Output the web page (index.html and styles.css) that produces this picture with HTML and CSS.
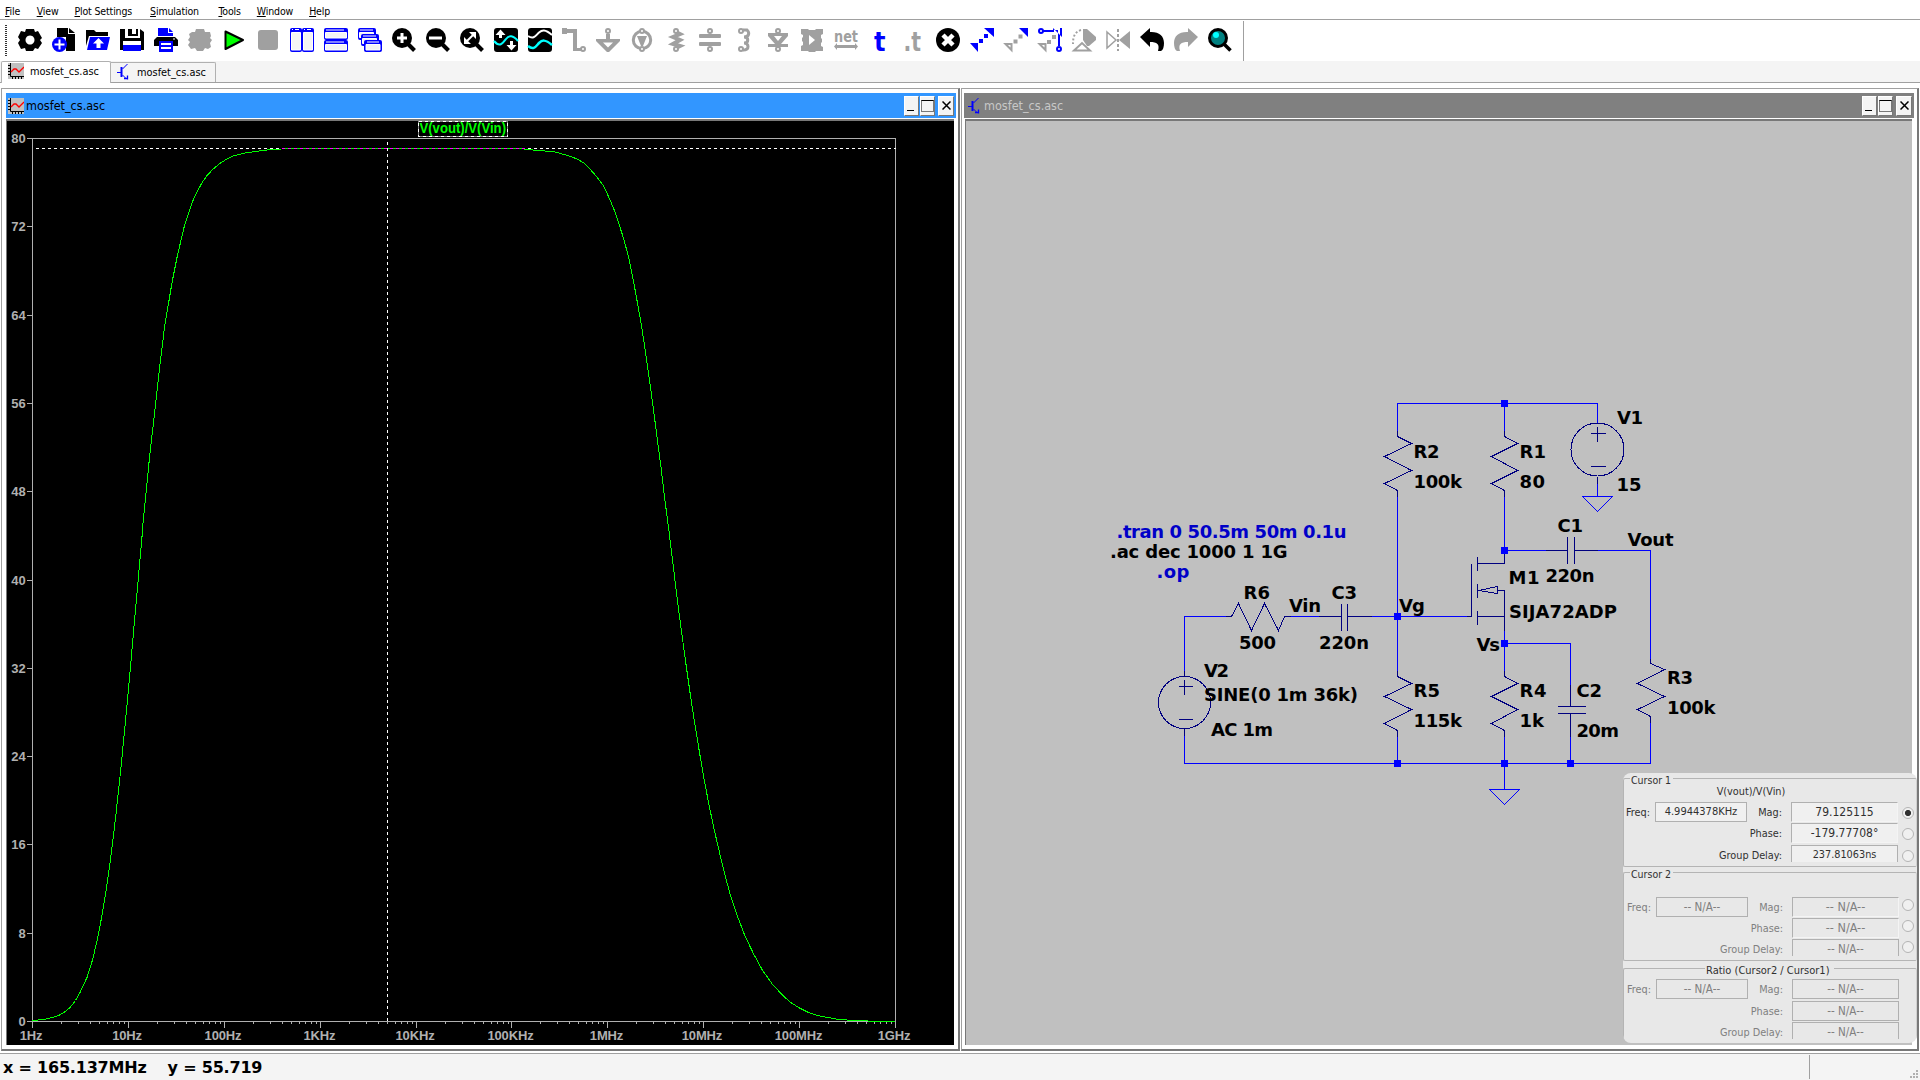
FILE: index.html
```html
<!DOCTYPE html>
<html lang="en">
<head>
<meta charset="utf-8">
<title>mosfet_cs.asc</title>
<link rel="stylesheet" href="styles.css">
</head>
<body>
<div class="app">
<nav class="menubar">
<span><u>F</u>ile</span><span class="m-view"><u>V</u>iew</span><span><u>P</u>lot Settings</span><span class="m-sim"><u>S</u>imulation</span><span class="m-tools"><u>T</u>ools</span><span><u>W</u>indow</span><span><u>H</u>elp</span>
</nav>
<div class="toolbar">
<i class="grip"></i>
<div class="tools">
<svg viewBox="0 0 24 24"><path fill-rule="evenodd" d="M8 1h8l1 3 3-1 4 7-2 2 2 3-4 6-3-1-2 3H8l-1-3-4 1-3-6 2-3-2-3 3-6 4 1zM12 7.500a4.500 4.500 0 1 0 .01 0z"/></svg>
<svg viewBox="0 0 24 24"><path d="M5 0h11v6h7v17H14V9H5z"/><path d="M17 0l6 5h-6z"/><circle cx="7.500" cy="16.500" r="7.500" fill="#00f"/><path d="M7.500 11.500v10M2.500 16.500h10" stroke="#fff" stroke-width="2"/></svg>
<svg viewBox="0 0 24 24"><path d="M0 2h8l2 2h12v4H3L0 18z"/><path d="M4 9h20l-3 13H1z" fill="#00f"/><path d="M12.500 10l5.500 5.500h-3.500v4.500h-4v-4.500H7z" fill="#fff"/></svg>
<svg viewBox="0 0 24 24"><path d="M0 1h5v9h15V1l4 3v18H0z"/><path d="M8 1h10v7H8z"/><path d="M12 1h4v5h-4z" fill="#fff"/><path d="M3 13h18v4H3z" fill="#fff"/><path d="M3 17h18v6H3z" fill="#00f"/></svg>
<svg viewBox="0 0 24 24"><path d="M4 0h10v5h5v3H4z" fill="#00f"/><path d="M15 0l4 4h-4z" fill="#00f"/><path d="M3 9h18l3 3v6H0v-6z"/><path d="M5 13h14v11H5z" fill="#00f"/><path d="M7 15h10v2H7zm0 4h10v2H7z" fill="#fff"/><path d="M19 11h2" stroke="#fff"/></svg>
<svg viewBox="0 0 24 24" class="off"><path d="M8 1h8l1 3 5 0 1 4-1 2 2 2-2 3 1 4-3 2-3-1-2 3H9l-2-3-4 1-3-4 2-3-2-2 2-3-1-3 3-2 3 0z"/></svg>
<svg viewBox="0 0 24 24"><path d="M3.500 3.500l17.500 8.500-17.500 9z" fill="#0f0" stroke="#000" stroke-width="2" stroke-linejoin="round"/></svg>
<svg viewBox="0 0 24 24" class="off"><rect x="2" y="2" width="20" height="20" rx="3"/></svg>
<svg viewBox="0 0 24 24" class="win"><rect width="12" height="24" rx="2"/><rect x="12" width="12" height="24" rx="2"/><path d="M1.500 4.500h9V22h-9zM13.500 4.500h9V22h-9zM2 1.500h1m2 0h4M14 1.500h1m2 0h4"/></svg>
<svg viewBox="0 0 24 24" class="win"><rect width="24" height="12" rx="2"/><rect y="12" width="24" height="12" rx="2"/><path d="M1.500 4.500h21v5.500h-21zM1.500 16.500h21V22h-21zM2 2h18M2 14h18"/></svg>
<svg viewBox="0 0 24 24" class="win"><rect width="18" height="12" rx="2"/><path d="M1.500 4.500h14v5h-14zM2 2h13"/><rect x="3" y="6" width="18" height="12" rx="2"/><path d="M4.500 10.500h14v5h-14zM5 8h13"/><rect x="6" y="12" width="18" height="12" rx="2"/><path d="M8 16.500h14V22H8zM9 14h12"/></svg>
<svg viewBox="0 0 24 24"><circle cx="10" cy="10" r="10"/><path d="M15 15l7.500 7.500" stroke="#000" stroke-width="4"/><path d="M10 5v10M5 10h10" stroke="#fff" stroke-width="3"/></svg>
<svg viewBox="0 0 24 24"><circle cx="10" cy="10" r="10"/><path d="M15 15l7.500 7.500" stroke="#000" stroke-width="4"/><path d="M3 10h13" stroke="#fff" stroke-width="3"/></svg>
<svg viewBox="0 0 24 24"><circle cx="10" cy="10" r="10"/><path d="M15 15l7.500 7.500" stroke="#000" stroke-width="4"/><path d="M6 14l8-8" stroke="#fff" stroke-width="2"/><path d="M9 4h7v7zM4 9v7h7z" fill="#fff"/></svg>
<svg viewBox="0 0 24 24"><rect width="24" height="24" rx="3"/><path d="M0 13c6 7 9 2 12-2s7-4 12 2" fill="none" stroke="#0ff" stroke-width="2"/><path d="M6.500 1.500l5 5.500H8v3H5V7H1.500zM17.500 22.500l5-5.500H19v-4h-3v4h-3.500z" fill="#fff"/></svg>
<svg viewBox="0 0 24 24"><rect width="24" height="24" rx="3"/><path d="M0 8c6 4 8-1 11-3.500s6-3.500 13 2.500" fill="none" stroke="#fff" stroke-width="2"/><path d="M0 18c6 5 8 0 11-3s6-4 13 2" fill="none" stroke="#0ff" stroke-width="2.500"/></svg>
<svg viewBox="0 0 24 24" class="off"><path d="M0 0h5v1h10v19h4v3h-8V5H5v1H0z"/><circle cx="21" cy="21" r="2" class="ring"/></svg>
<svg viewBox="0 0 24 24" class="off"><path d="M0 11h10V6h4v5h10v2L13 24h-2L0 13z"/><path d="M7 14.500h10l-5 5z" fill="#fff"/><circle cx="12" cy="3" r="2" class="ring"/></svg>
<svg viewBox="0 0 24 24" class="off"><circle cx="12" cy="12" r="8.700" fill="none" stroke="#a0a0a0" stroke-width="3"/><path d="M7 8h10l-4 10h-2z"/><circle cx="12" cy="3" r="2" class="ring"/><circle cx="12" cy="21" r="2" class="ring"/></svg>
<svg viewBox="0 0 24 24" class="off"><path d="M12 4l4 2-7 3 7 3-7 4 7 2-4 2" fill="none" stroke="#a0a0a0" stroke-width="4"/><circle cx="12" cy="3" r="2" class="ring"/><circle cx="12" cy="21" r="2" class="ring"/></svg>
<svg viewBox="0 0 24 24" class="off"><rect x="1" y="6" width="22" height="4" rx="1"/><rect x="1" y="14" width="22" height="4" rx="1"/><circle cx="12" cy="3" r="2" class="ring"/><circle cx="12" cy="21" r="2" class="ring"/></svg>
<svg viewBox="0 0 24 24" class="off"><path d="M11 2h4c3 3 2 7-3 7 5 0 5 6 0 6 5 0 6 7-1 7" fill="none" stroke="#a0a0a0" stroke-width="3"/><circle cx="9" cy="3" r="2" class="ring"/><circle cx="9" cy="21" r="2" class="ring"/></svg>
<svg viewBox="0 0 24 24" class="off"><path d="M2 5h20v3l-7 8h7v3H2v-3h7L2 8z"/><path d="M8 8h8l-4 5z" fill="#fff"/><circle cx="12" cy="3" r="2" class="ring"/><circle cx="12" cy="21" r="2" class="ring"/></svg>
<svg viewBox="0 0 24 24" class="off"><path d="M1 1h7l1 1h6l1-1h7v5l-2 1v3l1 1v3l-1 1v3l2 1v4h-7l-1 1H9l-1-1H1v-5l2-1v-3l-1-1v-3l1-1V7L1 6z"/><path d="M9 7l6 5-6 5z" fill="#fff"/></svg>
<svg viewBox="0 0 24 24" class="off"><text x="0" y="14" textLength="24" lengthAdjust="spacingAndGlyphs" class="net">net</text><path d="M3 15v2h18v-2l3 3.500-3 3.500v-2H3v2l-3-3.500z"/></svg>
<svg viewBox="0 0 24 24"><text x="6" y="22.500" textLength="11.500" lengthAdjust="spacingAndGlyphs" class="tee">t</text></svg>
<svg viewBox="0 0 24 24" class="off"><text x="1.500" y="22.500" textLength="17.500" lengthAdjust="spacingAndGlyphs" class="tee dim">.t</text></svg>
<svg viewBox="0 0 24 24"><circle cx="12" cy="12" r="12"/><path d="M7 7l10 10M17 7L7 17" stroke="#fff" stroke-width="4.500"/></svg>
<svg viewBox="0 0 24 24" class="blue"><path d="M14 0h10v9zM0 15h8v9zM14 6h4v4h-4zM9 11h4v4H9z"/></svg>
<svg viewBox="0 0 24 24"><path d="M15 0h9v9z" fill="#00f"/><path d="M14.500 6.500h4v4h-4zM9.500 11.500h4v4h-4z" fill="#a0a0a0"/><path d="M1.500 16h6v6z" fill="none" stroke="#a0a0a0" stroke-width="2"/></svg>
<svg viewBox="0 0 24 24"><path d="M15 0h9v9zM5 2h15v16h2V0H15v2z" fill="#00f"/><path d="M5 2h11v2H5z" fill="#00f"/><circle cx="3" cy="3" r="2" fill="#fff" stroke="#00f" stroke-width="2"/><circle cx="21" cy="21" r="2" fill="#fff" stroke="#00f" stroke-width="2"/><path d="M14 7h4v4h-4zM9 12h4v4H9z" fill="#a0a0a0"/><path d="M1.500 16h6v6z" fill="none" stroke="#a0a0a0" stroke-width="2"/></svg>
<svg viewBox="0 0 24 24" class="off"><path d="M11 1h4l9 8v3l-7 6h-2l-4-6z"/><path d="M9 2C3 4 1 8 1 16" fill="none" stroke="#a0a0a0" stroke-width="2" stroke-dasharray="2 2"/><path d="M2 22.500L10 15l8 7.500z" fill="#fff" stroke="#a0a0a0" stroke-width="2"/></svg>
<svg viewBox="0 0 24 24" class="off"><path d="M12 1v22" stroke="#a0a0a0" stroke-width="2" stroke-dasharray="3 2"/><path d="M24 3v18l-11-9z"/><path d="M1 4l9 8-9 8z" fill="none" stroke="#a0a0a0" stroke-width="1.500"/></svg>
<svg viewBox="0 0 24 24"><path d="M10 0v4c9-.500 14 4 14 11 0 4-1 7-3 8h-3c2-7-1-9-8-9v5L0 9z"/></svg>
<svg viewBox="0 0 24 24" class="off"><path d="M14 0v4C5 3.500 0 8 0 15c0 4 1 7 3 8h3c-2-7 1-9 8-9v5l10-10z"/></svg>
<svg viewBox="0 0 24 24"><circle cx="10" cy="10" r="8.500" fill="#008080" stroke="#000" stroke-width="3"/><path d="M16 16l6.500 6.500" stroke="#000" stroke-width="3.500"/><circle cx="8" cy="7" r="3" fill="#0ff"/></svg>
</div>
</div>
<div class="tabs">
<div class="tab on"><svg class="mini" viewBox="0 0 16 16"><use href="#plot-icon"/></svg><span>mosfet_cs.asc</span></div>
<div class="tab"><svg class="mini" viewBox="0 0 16 16"><use href="#fet-icon"/></svg><span>mosfet_cs.asc</span></div>
</div>
<svg width="0" height="0" class="defs"><defs>
<g id="plot-icon"><path d="M0 0h16v16H0z" fill="#c0c0c0"/><path d="M2.500 0v13.500H16" fill="none" stroke="#000"/><path d="M0 2.500h2M0 5.500h2M0 8.500h2M0 11.500h2M4.500 14v2M7.500 14v2M10.500 14v2M13.500 14v2" stroke="#000"/><path d="M3 9l3-3h2l3 3 2-2 3-3" fill="none" stroke="#f00" stroke-width="1.300"/></g>
<g id="fet-icon" fill="none" stroke="#00f"><path d="M0 8.500h5M5.500 5l5-5M5.500 11l4 4"/><path d="M4.500 3v10" stroke-width="2"/><path d="M10.500 11.500v4M7 14.500h4" stroke-width="1.300"/></g>
</defs></svg>
<div class="mdi">
<section class="window left">
<header class="title active"><svg class="mini" viewBox="0 0 16 16"><use href="#plot-icon"/></svg><span>mosfet_cs.asc</span><div class="buttons"><b class="min"></b><b class="max"></b><b class="close"><svg viewBox="0 0 9 9"><path d="M.5.5l8 8m0-8l-8 8"/></svg></b></div></header>
<div class="client dark">
<svg class="plot" viewBox="7 121 947 924" width="947" height="924">
<defs><path id="minor" d="M28.900 0v2M45.800 0v2M57.700 0v2M67 0v2M74.600 0v2M81 0v2M86.600 0v2M91.500 0v2"/></defs>
<g transform="translate(.5 .5)" shape-rendering="crispEdges" fill="none">
<g stroke="#b0b0b0">
<path d="M32 138H895V1021H32z"/>
<path d="M26 138h6M26 226h6M26 315h6M26 403h6M26 491h6M26 580h6M26 668h6M26 756h6M26 844h6M26 933h6M26 1021h6"/>
<path d="M32 1021v6M128 1021v6M224 1021v6M320 1021v6M416 1021v6M511 1021v6M607 1021v6M703 1021v6M799 1021v6M895 1021v6"/>
<use href="#minor" x="32" y="1021"/><use href="#minor" x="128" y="1021"/><use href="#minor" x="224" y="1021"/><use href="#minor" x="320" y="1021"/><use href="#minor" x="416" y="1021"/><use href="#minor" x="511" y="1021"/><use href="#minor" x="607" y="1021"/><use href="#minor" x="703" y="1021"/><use href="#minor" x="799" y="1021"/>
</g>
<path stroke="#fff" stroke-dasharray="3 3" d="M35 148H895"/>
<polyline stroke="#0f0" points="32,1020 43,1019 52,1017 59,1014.500 65,1011 70,1006.500 75,1000 80,991 86.500,977 92,959.500 96,942.600 100,923 105,894 110,859 115,818 120,771.500 125,720.600 130,666 135,609 141.300,539 142.300,525 145.300,495 149,457 152.300,428 157.300,383 160.300,357 164,327 168,303 171.700,281 176.700,256 180.700,239 184,225 189,210 192,201 196.700,191 201.700,182 206,175.700 211.700,169.500 218.300,163.700 226.700,158.300 233.300,155.300 243.300,152.700 255,151 266.700,149.500 281,149"/>
<path stroke="#0f0" d="M281 148H524"/><path stroke="#f0f" stroke-dasharray="3 3" d="M281 148H524"/>
<polyline stroke="#0f0" points="524,149 540,150 555,151.600 568.300,155.300 576,158.300 583.300,162.300 591.700,171 598,178.500 603.300,185.700 608.300,196.700 613.300,208.300 617.300,220 622.700,236.700 627.700,255 630.700,269 634.700,290 638.300,310 640.700,323.300 644.300,346.700 648.300,375 652.700,406.700 656.300,435 660.700,468.300 664,496.700 668,526.700 674.300,578.300 679,616 685,660.400 690,695.400 695,727.700 699.500,755 704,781 708.300,803.300 713.300,827.500 719,852 724,872.700 730,895 736.700,915 744.300,935 753.300,953.800 761.700,969.300 771.700,983.500 783.300,996 791,1002.500 799.300,1007.700 808,1012 816.700,1015 836.700,1018.700 856.700,1020.300 895,1021"/>
<path stroke="#fff" stroke-dasharray="3 3" d="M387 141V1021"/>
<path stroke="#888" d="M418 121H507V136H418z"/><path stroke="#fff" stroke-dasharray="3 3" d="M418 121H507V136H418z"/>
</g>
<text x="419.500" y="133" textLength="86.500" lengthAdjust="spacingAndGlyphs" class="trace">V(vout)/V(Vin)</text>
<g class="axis end"><text x="25.500" y="143">80</text><text x="25.500" y="231">72</text><text x="25.500" y="320">64</text><text x="25.500" y="408">56</text><text x="25.500" y="496">48</text><text x="25.500" y="585">40</text><text x="25.500" y="673">32</text><text x="25.500" y="761">24</text><text x="25.500" y="849">16</text><text x="25.500" y="938">8</text><text x="25.500" y="1026">0</text></g>
<g class="axis"><text x="31" y="1040">1Hz</text><text x="127" y="1040">10Hz</text><text x="223" y="1040">100Hz</text><text x="319.500" y="1040">1KHz</text><text x="415" y="1040">10KHz</text><text x="510.500" y="1040">100KHz</text><text x="606.500" y="1040">1MHz</text><text x="702" y="1040">10MHz</text><text x="798.500" y="1040">100MHz</text><text x="894" y="1040">1GHz</text></g>
</svg>
</div>
</section>
<section class="window right">
<header class="title"><svg class="mini" viewBox="0 0 16 16"><use href="#fet-icon"/></svg><span>mosfet_cs.asc</span><div class="buttons"><b class="min"></b><b class="max"></b><b class="close"><svg viewBox="0 0 9 9"><path d="M.5.5l8 8m0-8l-8 8"/></svg></b></div></header>
<div class="client">
<svg class="schematic" viewBox="966 121 946 924" width="946" height="924">
<g transform="translate(.5 .5)" shape-rendering="crispEdges" fill="none">
<path stroke="#00f" d="M1397 432V403H1597V423M1504 403V432M1397 496V670M1397 736V763M1504 496V550M1504 550H1545M1597 550H1650V658M1650 722V763H1184V735M1504 630V670M1504 736V789M1504 643H1570V684M1570 736V763M1184 670V616H1225M1290 616H1318M1371 616H1466M1597 483V496M1582 496H1612L1597 511zM1489 789H1519L1504 804z"/>
<g stroke="#000080">
<path d="M1397 430V436L1411 443 1384 456 1411 470 1384 483 1397 490V496M1504 430V436L1517 443 1491 456 1517 470 1491 483 1504 490V496"/>
<path d="M1397 670V676L1411 683 1384 696 1411 709 1384 723 1397 730V736M1504 670V676L1517 683 1491 696 1517 709 1491 723 1504 730V736"/>
<path d="M1650 658V663L1664 669 1637 683 1664 696 1637 709 1650 716V722M1225 616H1231L1238 603 1251 630 1264 603 1278 630 1284 616H1290"/>
<path d="M1318 616H1341M1341 603V630M1347 603V630M1347 616H1371M1545 550H1567M1567 536V563M1574 536V563M1574 550H1597M1570 684V706M1557 706H1585M1557 713H1585M1570 713V736"/>
<path d="M1504 550V563H1477M1477 556V570M1471 563V616H1466M1477 583V597M1478 590L1497 586V593zM1497 590H1504V630M1477 610V624M1477 616H1504"/>
<circle cx="1597" cy="449" r="26.500"/><circle cx="1184" cy="702" r="26"/>
<path d="M1590 433H1605M1597 426V441M1590 466H1605M1597 476V483M1178 686H1192M1184 679V694M1178 719H1192M1184 670V676M1184 728V735"/>
</g>
<path fill="#00f" d="M1500.500 399.500h7v7h-7zM1500.500 546.500h7v7h-7zM1393.500 612.500h7v7h-7zM1500.500 639.500h7v7h-7zM1393.500 759.500h7v7h-7zM1500.500 759.500h7v7h-7zM1566.500 759.500h7v7h-7z"/>
</g>
<g class="label">
<text x="1413.500" y="458" textLength="26">R2</text><text x="1413.500" y="488" textLength="48.500">100k</text>
<text x="1519.500" y="458" textLength="26.500">R1</text><text x="1519.500" y="488" textLength="25.500">80</text>
<text x="1617" y="423.500" textLength="26">V1</text><text x="1616.500" y="490.500" textLength="25">15</text>
<text x="1557.500" y="531.500" textLength="25.500">C1</text><text x="1627.500" y="545.500" textLength="46">Vout</text>
<text x="1508.500" y="584" textLength="31">M1</text><text x="1545.500" y="581.500" textLength="49">220n</text>
<text x="1509" y="617.500" textLength="108">SIJA72ADP</text><text x="1399" y="612" textLength="26">Vg</text>
<text x="1476.500" y="651" textLength="23.500">Vs</text><text x="1667" y="683.500" textLength="26">R3</text>
<text x="1667" y="713.500" textLength="48.500">100k</text><text x="1519.500" y="697" textLength="27">R4</text>
<text x="1519.500" y="727" textLength="24.500">1k</text><text x="1576.500" y="697" textLength="25.500">C2</text>
<text x="1576.500" y="737" textLength="42.500">20m</text><text x="1413.500" y="697" textLength="26.500">R5</text>
<text x="1413.500" y="727" textLength="48.500">115k</text><text x="1243.500" y="598.500" textLength="26.500">R6</text>
<text x="1239" y="648.500" textLength="37">500</text><text x="1289" y="612" textLength="32">Vin</text>
<text x="1331.500" y="598.500" textLength="25.500">C3</text><text x="1319" y="648.500" textLength="50">220n</text>
<text x="1204" y="676.500" textLength="25">V2</text><text x="1204" y="700.500" textLength="154">SINE(0 1m 36k)</text>
<text x="1211" y="735.500" textLength="62">AC 1m</text>
<text x="1116.500" y="537.500" textLength="230" fill="#0000c8">.tran 0 50.5m 50m 0.1u</text>
<text x="1110" y="557.500" textLength="177.500">.ac dec 1000 1 1G</text>
<text x="1156.500" y="578" textLength="33" fill="#0000c8">.op</text>
</g>
</svg>
</div>
</section>
<aside class="cursors">
<div class="group g1"><em class="legend">Cursor 1</em>
<span class="head">V(vout)/V(Vin)</span>
<label>Freq:</label><output class="full">4.9944378KHz</output><label>Mag:</label><output class="big">79.125115</output><i class="radio sel"></i>
<label class="wide">Phase:</label><output class="big">-179.77708°</output><i class="radio"></i>
<label class="wide">Group Delay:</label><output class="cut">237.81063ns</output><i class="radio"></i></div>
<div class="group g2"><em class="legend">Cursor 2</em>
<span class="head"></span>
<label>Freq:</label><output class="full na">-- N/A--</output><label>Mag:</label><output class="big wider">-- N/A--</output><i class="radio"></i>
<label class="wide">Phase:</label><output class="big wider">-- N/A--</output><i class="radio"></i>
<label class="wide">Group Delay:</label><output class="cut na">-- N/A--</output><i class="radio"></i></div>
<div class="group g3"><em class="legend mid">Ratio (Cursor2 / Cursor1)</em>
<span class="head"></span>
<label>Freq:</label><output class="full na">-- N/A--</output><label>Mag:</label><output class="full na">-- N/A--</output><i></i>
<label class="wide">Phase:</label><output class="full na">-- N/A--</output><i></i>
<label class="wide">Group Delay:</label><output class="cut na">-- N/A--</output><i></i></div>
</aside>
</div>
<footer class="status"><span class="sx">x = 165.137MHz</span><span class="sy">y = 55.719</span><div class="corner"><svg viewBox="0 0 9 9" width="9" height="9"><path d="M6 0h2v2H6zM3 3h2v2H3zM6 3h2v2H6zM0 6h2v2H0zM3 6h2v2H3zM6 6h2v2H6z" fill="#b0b0b0"/></svg></div></footer>
</div>
</body>
</html>
```
FILE: styles.css
```css
* { box-sizing: border-box; }
body { margin: 0; background: #f4f4f4; font-family: "DejaVu Sans Condensed", "DejaVu Sans", sans-serif; font-stretch: condensed; color: #000; }
.app { width: 1920px; height: 1080px; overflow: hidden; display: flex; flex-direction: column; }
svg { display: block; }
.defs { height: 0; flex: none; }

.menubar { height: 20px; flex: none; display: flex; gap: 16px; padding: 4px 0 0 5px; background: #fff; border-bottom: 1px solid #a0a0a0; font-size: 10.5px; line-height: 15px; letter-spacing: -.15px; white-space: nowrap; }
.menubar u { text-underline-offset: 1px; }
.m-view { margin-left: .5px; }
.m-sim { margin-left: 2px; }
.m-tools { margin-left: 3.500px; }

.toolbar { height: 41px; flex: none; display: flex; align-items: center; background: #fff; width: 100%; }
.grip { width: 2px; height: 31px; margin: 0 11px 0 5px; background: repeating-linear-gradient(#333 0 1px, #fff 1px 2px); }
.tools { display: flex; gap: 10px; height: 40px; padding: 7px 11px 0 0; width: 1226px; border-right: 1px solid #a0a0a0; margin-top: 1px; }
.tools svg { width: 24px; height: 24px; flex: none; overflow: visible; }
.off { fill: #a0a0a0; }
.blue { fill: #00f; }
.ring { fill: #fff; stroke: #a0a0a0; stroke-width: 2; }
.win rect { fill: #00f; }
.win path { fill: #f4f4f4; stroke: #fff; stroke-width: 1; }
.net { font: bold 15px "DejaVu Sans", sans-serif; fill: #a0a0a0; }
.tee { font: bold 26px "DejaVu Sans", sans-serif; fill: #00f; }
.tee.dim { fill: #a0a0a0; }

.tabs { height: 22px; flex: none; display: flex; align-items: flex-end; padding-left: 1px; border-bottom: 1px solid #a0a0a0; }
.tab { display: flex; align-items: center; height: 20px; width: 105px; gap: 4px; padding: 0 0 1px 6px; border: 1px solid #b0b0b0; border-left: 0; border-bottom: 0; border-radius: 0 2px 0 0; font-size: 10.900px; white-space: nowrap; }
.tab span { padding-top: 1px; }
.tab.on { height: 22px; width: 110px; gap: 6px; margin-bottom: -1px; padding: 0 0 3px 6px; background: #fff; border-left: 1px solid #b0b0b0; border-radius: 2px 2px 0 0; }
.mini { width: 16px; height: 16px; flex: none; }

.mdi { flex: none; height: 970px; display: flex; gap: 1px; padding: 5px 1px 2px 1px; background: #fff; position: relative; }
.window { height: 963px; background: #fff; border: 1px solid #a0a0a0; border-right: 2px solid #787878; border-bottom: 2px solid #787878; }
.left { width: 959px; padding: 4px 2px 4px 4px; }
.right { width: 958px; padding: 4px 3px 4px 2px; }
.title { height: 25px; display: flex; align-items: center; padding: 0 2px 0 2px; background: #808080; color: #c8c8c8; font-size: 12.500px; }
.right .title { padding-left: 4px; }
.title.active { background: #3296ff; color: #000; }
.title span { margin: 0 auto 0 2px; }
.right .title span { margin-left: 0; }
.buttons { display: flex; gap: 1px; }
.buttons b { width: 15px; height: 20px; background: #f4f4f4; border: 1px solid #fff; border-right-color: #787878; border-bottom-color: #787878; display: flex; align-items: center; justify-content: center; }
.min::before { content: ""; width: 7px; height: 1px; margin: 9px 3px 0 0; background: #000; }
.max::before { content: ""; width: 11px; height: 10px; border: 1px solid #787878; border-top-color: #000; }
.buttons .close { margin-left: 2px; width: 16px; }
.close svg { width: 9px; height: 9px; fill: none; stroke: #000; stroke-width: 1.5; }
.client { height: 926px; margin: 1px 2px 0 0; border-top: 2px solid #787878; border-left: 1px solid #787878; background: #c0c0c0; overflow: hidden; }
.right .client { margin-left: 1px; }
.client.dark { background: #000; }

.axis text { font: bold 13px "Liberation Sans", sans-serif; fill: #b0b0b0; text-anchor: middle; letter-spacing: -.15px; }
.axis.end text { text-anchor: end; }
.trace { font: bold 14px "Liberation Sans", sans-serif; fill: #0f0; }
.label text { font: bold 18px "DejaVu Sans", sans-serif; }

.cursors { position: absolute; left: 1623px; top: 690px; width: 294px; height: 270px; padding-top: 5px; border-radius: 8px; background: #e8e8e8; overflow: hidden; color: #303030; font-size: 10.8px; }
.group { position: relative; height: 89px; border: 1px solid #b4b4b4; display: grid; grid-template-columns: 26px 5px 92px 35px 9px 107px 4px 12px; border-right-color: #d0d0d0; border-radius: 2px; }
.g1 { grid-template-rows: 23px 21px 22px 18px; }
.g2 { margin-top: 5px; grid-template-rows: 24px 21px 21px 18px; }
.g3 { margin-top: 7px; grid-template-rows: 10px 22px 21px 18px; border-bottom: 0; }
.g2, .g3 { color: #808080; padding-left: 1px; grid-template-columns: 26px 5px 92px 35px 9px 107px 3px 12px; }
.legend { position: absolute; left: 6px; top: -6px; padding: 0 2px 0 1px; background: #e8e8e8; font-style: normal; font-size: 10.500px; line-height: 15px; color: #303030; }
.legend.mid { left: 81px; padding-right: 4px; font-size: 11px; }
.head { grid-column: 1 / -1; text-align: center; padding: 5px 36px 0 0; line-height: 15px; }
.group label { white-space: nowrap; text-align: right; line-height: 22px; }
.group label.wide { grid-column: 1 / 5; }
.group label:nth-of-type(1) { grid-column: 1; }
.group label:nth-of-type(2) { grid-column: 4; }
.group output { height: 20px; grid-column: 6; border: 1px solid #b0b0b0; border-right-color: #f4f4f4; border-bottom-color: #f4f4f4; background: #f0f0f0; text-align: center; line-height: 18px; white-space: nowrap; }
.group output:nth-of-type(1) { grid-column: 3; }
.group .full { border-color: #b0b0b0; font-size: 11px; }
.group .big { font-size: 12px; }
.group .wider { font-size: 12.5px; }
.group .na { font-size: 11.5px; }
.group .cut { height: 17px; border-bottom: 0; border-right-color: #b0b0b0; }
.g2 output, .g3 output { background: #e8e8e8; }
.radio { grid-column: 8; width: 12px; height: 12px; margin-top: 5px; border: 1px solid #b4b4b4; border-radius: 50%; background: #f0f0f0; }
.g2 .radio { margin-top: 2px; }
.radio.sel { background: radial-gradient(circle, #303030 0 2.800px, #f0f0f0 3.200px); }

.status { flex: 1; display: flex; align-items: center; border-top: 1px solid #a0a0a0; background: #f4f4f4; font: bold 16px "DejaVu Sans", sans-serif; letter-spacing: -.2px; white-space: nowrap; }
.sx { margin: 0 21px 0 3px; }
.corner { margin-left: auto; width: 111px; height: 24px; border-left: 1px solid #a0a0a0; display: flex; align-items: flex-end; justify-content: flex-end; padding-right: 1px; }
```
